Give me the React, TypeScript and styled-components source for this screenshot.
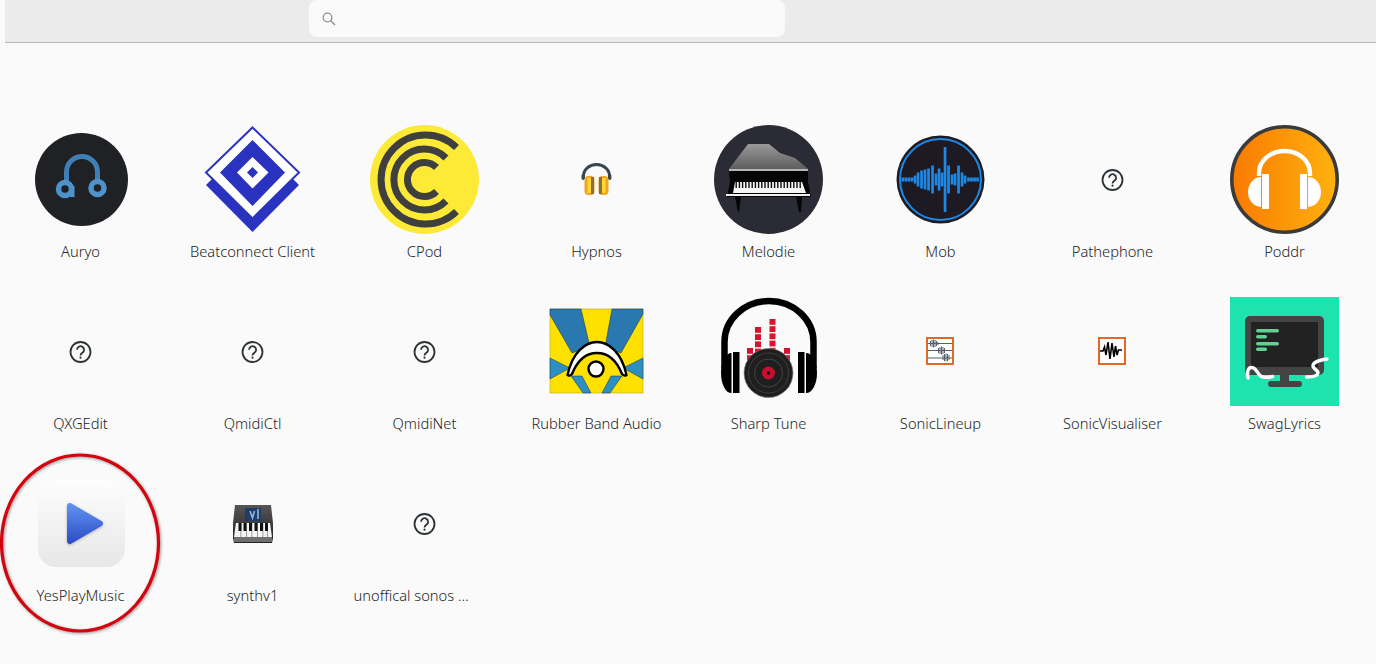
import React from 'react';
import styled, { createGlobalStyle } from 'styled-components';

const GlobalStyle = createGlobalStyle`
    html, body {
        margin: 0;
        height: 100%;
        overflow: hidden;
        background: #fafafa;
    }
`;

const QuestionIcon = () => (
    <svg width="109" height="109" viewBox="0 0 109 109">
        <circle cx="54.500" cy="55" r="10" fill="none" stroke="#2e3436" strokeWidth="1.800" />
        <path d="M51.100 52.700a3.500 3.500 0 1 1 5.500 2.900c-1.300.9-2.100 1.500-2.100 2.900" fill="none" stroke="#2e3436" strokeWidth="1.800" />
        <circle cx="54.500" cy="60.700" r="1.100" fill="#2e3436" />
    </svg>
);

const AuryoIcon = () => (
    <svg width="109" height="109" viewBox="26 125 109 109">
        <circle cx="81.500" cy="179.500" r="46.500" fill="#1f2125" />
        <path d="M66.500 186v-14a15.500 15.500 0 0 1 31 0v10" fill="none" stroke="#3f7fb5" strokeWidth="5" />
        <circle cx="65" cy="189" r="6.500" fill="#1f2125" stroke="#4d92c9" strokeWidth="5.500" />
        <circle cx="97.500" cy="188" r="6.500" fill="#1f2125" stroke="#4d92c9" strokeWidth="5.500" />
        <rect x="70" y="186" width="4.500" height="11" fill="#4d92c9" />
    </svg>
);

const BeatconnectIcon = () => (
    <svg width="109" height="109" viewBox="198 125 109 109">
        <path d="M206 185l46.500 47L299 185l-8-8H214z" fill="#2a33bf" />
        <path d="M252.500 127.500L299 172.500l-46.500 46L206 172.500z" fill="#fff" stroke="#2a33bf" strokeWidth="2" />
        <path d="M252.500 140L285 172.500l-32.500 33.500L220 172.500z" fill="#2a33bf" />
        <path d="M252.500 157L268.500 172.500l-16 16L237 172.500z" fill="#fff" />
        <path d="M252.500 167L258 172.500l-5.500 5.500L247 172.500z" fill="#2a33bf" />
    </svg>
);

const CPodIcon = () => (
    <svg width="109" height="109" viewBox="370 125 109 109">
        <circle cx="424.500" cy="179.500" r="54.500" fill="#fdea36" />
        <g fill="none" stroke="#3f3f3f" strokeWidth="7">
            <path d="M456.500 147.500a44.500 44.500 0 1 0 0 64" />
            <path d="M446 158a30.500 30.500 0 1 0 0 43" />
            <path d="M436.500 167.500a17 17 0 1 0 0 24" />
        </g>
    </svg>
);

const HypnosIcon = () => (
    <svg width="109" height="109" viewBox="542 125 109 109">
        <path d="M583.500 177v-1a13 11.500 0 0 1 26 0v1" fill="none" stroke="#37474f" strokeWidth="3" />
        <rect x="581.500" y="174" width="3.400" height="6" rx="1.700" fill="#37474f" />
        <rect x="608" y="174" width="3.400" height="6" rx="1.700" fill="#37474f" />
        <rect x="584.500" y="176" width="10" height="19" rx="4" fill="#f2a31f" />
        <rect x="598.500" y="176" width="10" height="19" rx="4" fill="#f2a31f" />
        <rect x="591" y="177" width="3" height="17" fill="#8d6e43" />
        <rect x="599" y="177" width="3" height="17" fill="#8d6e43" />
        <rect x="587.500" y="178" width="3.500" height="15" fill="#fdd835" />
        <rect x="602" y="178" width="3.500" height="15" fill="#fdd835" />
    </svg>
);

const MelodieIcon = () => (
    <svg width="109" height="109" viewBox="714 125 109 109">
        <defs>
            <linearGradient id="lid" x1="0" y1="0" x2="0" y2="1">
                <stop offset="0" stopColor="#999" />
                <stop offset="1" stopColor="#5e5e5e" />
            </linearGradient>
        </defs>
        <circle cx="768.500" cy="179.500" r="54.500" fill="#2a2b34" />
        <path d="M748 144h21l11 9 15 5 13 11H729z" fill="url(#lid)" />
        <rect x="729" y="169" width="79" height="2" fill="#b5b5b5" />
        <path d="M729 171h79v11l3 15H727l3-15z" fill="#050505" />
        <path d="M735 182h67l4 11h-73z" fill="#f4f4f4" />
        {Array.from({ length: 21 }, (_, i) => (
            <rect key={i} x={735.500 + i * 3.200} y="182" width="1.400" height="6" fill="#111" />
        ))}
        <rect x="726" y="194" width="84" height="2" fill="#eee" />
        <path d="M735 197h6l-2 15h-1z" fill="#050505" />
        <path d="M796 197h6l-1 15h-2z" fill="#050505" />
    </svg>
);

const mobBars: [number, number][] = [
    [903, 4], [906, 4], [909, 4], [912, 4], [915, 8], [918, 14], [921.500, 18], [925, 20], [928.500, 22], [932.500, 28],
    [936, 12], [939, 22], [942, 14], [945, 65], [948.500, 28], [952, 10], [955, 12], [958.500, 28], [962, 14], [965, 8],
    [968.500, 4], [971.500, 4], [974.500, 4], [977.500, 4],
];

const MobIcon = () => (
    <svg width="109" height="109" viewBox="886 125 109 109">
        <circle cx="940.500" cy="179.500" r="44" fill="#1d1a24" />
        <circle cx="940.500" cy="179.500" r="40.500" fill="none" stroke="#1e88e5" strokeWidth="2" />
        {mobBars.map(([x, h]) => (
            <rect key={x} x={x - 1.300} y={179.500 - h / 2} width="2.700" height={h} fill="#1e88e5" />
        ))}
    </svg>
);

const PoddrIcon = () => (
    <svg width="109" height="109" viewBox="1230 125 109 109">
        <defs>
            <linearGradient id="poddr" x1="0" y1="0" x2="1" y2="0">
                <stop offset="0" stopColor="#f97a00" />
                <stop offset="1" stopColor="#ffb20f" />
            </linearGradient>
        </defs>
        <circle cx="1284.500" cy="179.500" r="52.700" fill="url(#poddr)" stroke="#3a3a3a" strokeWidth="3.600" />
        <path d="M1259 176v-3a25.500 22 0 0 1 51 0v3" fill="none" stroke="#fff" strokeWidth="4.400" />
        <rect x="1262" y="174" width="7" height="35" fill="#fff" />
        <rect x="1300" y="174" width="7" height="35" fill="#fff" />
        <path d="M1261 177a13 15 0 0 0 0 30z" fill="#fff" />
        <path d="M1308 177a13 15 0 0 1 0 30z" fill="#fff" />
    </svg>
);

const RubberBandIcon = () => (
    <svg width="109" height="109" viewBox="542 297 109 109">
        <rect x="550" y="309" width="93" height="84" fill="#ffe100" stroke="#b8a33a" strokeWidth="0.600" />
        <g fill="#2a78b0" stroke="#10324a" strokeWidth="0.500">
            <path d="M550 309h31l9 38-18 6-22-38z" />
            <path d="M612 309h31v5l-22 39-16-6z" />
        </g>
        <g fill="#2c8fc0" stroke="#10324a" strokeWidth="0.500">
            <path d="M550 358l20 10-20 11z" />
            <path d="M643 358l-20 10 20 11z" />
            <path d="M582 376l9 17h-8l-12-17z" />
            <path d="M611 376l-9 17h8l12-17z" />
        </g>
        <path d="M567.500 375c5-23 18-33 29.500-33s24.500 10 29.500 33c-2 1.500-3.500 0-4.500-1-6-15-15-21-25-21s-19 6-25 21c-1 1-3 2.500-4.500 1z" fill="#fff" stroke="#000" strokeWidth="2.400" strokeLinejoin="round" />
        <circle cx="596" cy="369" r="7.500" fill="#fff" stroke="#000" strokeWidth="2.400" />
    </svg>
);

const SharpTuneIcon = () => (
    <svg width="109" height="109" viewBox="714 297 109 109">
        <path d="M724.500 368v-26a44.500 41 0 0 1 89 0v26" fill="none" stroke="#000" strokeWidth="6.500" />
        {[
            [747, 348, 4],
            [755, 327, 8],
            [769.500, 319, 9],
            [784, 348, 4],
        ].map(([x, top, n]) =>
            Array.from({ length: n }, (_, i) => (
                <rect key={`${x}-${i}`} x={x} y={top + i * 7.200} width="6" height="5.800" fill="#d7142f" />
            ))
        )}
        <path d="M731.500 353a10.500 20 0 0 0 0 40z" fill="#000" />
        <path d="M806 353a11 20 0 0 1 0 40z" fill="#000" />
        <rect x="733" y="352" width="6.500" height="41" fill="#000" />
        <rect x="798" y="352" width="6.500" height="41" fill="#000" />
        <circle cx="768.500" cy="373" r="24.500" fill="#1f1f1f" stroke="#888" strokeWidth="0.600" />
        <circle cx="768.500" cy="373" r="20" fill="none" stroke="#3c3c3c" strokeWidth="1" />
        <circle cx="768.500" cy="373" r="14" fill="none" stroke="#444" strokeWidth="1" />
        <circle cx="768.500" cy="373" r="6.500" fill="#c8102e" />
        <circle cx="768.500" cy="373" r="1.800" fill="#111" />
    </svg>
);

const SonicLineupIcon = () => (
    <svg width="109" height="109" viewBox="886 297 109 109">
        <rect x="927" y="338" width="26" height="26" fill="#fff" stroke="#df6a28" strokeWidth="2" />
        <g stroke="#56606c" strokeWidth="1">
            <path d="M928 343.500h24M928 350.500h24M928 358h24" />
            <path d="M930.500 341v5M932 340v7M933.500 339.500v8M935 340v7M936.500 341v5M938 342v3M938.500 348v5M940 347v7M941.500 346.500v8M943 347v7M944.500 348v5M943 355v5M944.500 354v7M946 353.500v8M947.500 354v7M949 355v5" />
        </g>
    </svg>
);

const SonicVisualiserIcon = () => (
    <svg width="109" height="109" viewBox="1058 297 109 109">
        <rect x="1099" y="338" width="26" height="26" fill="#fff" stroke="#df6a28" strokeWidth="2" />
        <path d="M1100 351h3l1.500-4 1.500 8 2-13 2 17 2-16 2 14 1.500-11 1.500 9 1.500-5h3.500" fill="none" stroke="#000" strokeWidth="1.600" />
    </svg>
);

const SwagLyricsIcon = () => (
    <svg width="109" height="109" viewBox="1230 297 109 109">
        <rect x="1230" y="297" width="109" height="109" fill="#1de3ae" />
        <rect x="1245" y="316" width="79" height="59" rx="5" fill="#444" />
        <rect x="1251" y="322" width="67" height="45" fill="#222" />
        <rect x="1280" y="375" width="9" height="6" fill="#444" />
        <rect x="1268" y="381" width="34" height="6" rx="3" fill="#444" />
        <g fill="#63cf93">
            <rect x="1256" y="329" width="23" height="3.400" rx="1.700" />
            <rect x="1256" y="335" width="11" height="3.400" rx="1.700" />
            <rect x="1256" y="342" width="23" height="3.400" rx="1.700" />
            <rect x="1256" y="347.500" width="11" height="3.400" rx="1.700" />
        </g>
        <g fill="none" stroke="#fff" strokeWidth="3.400" strokeLinecap="round">
            <path d="M1248 378c-1-6 0-11 4-10.500 5 .5 6 9 11 9.500 3 .3 6 .5 9.500-.5" />
            <path d="M1306.500 377c5 0 11-1 11.500-4 .5-3-5.500-4-5-7.500.5-4 7-5.500 14-6.500" />
        </g>
    </svg>
);

const YesPlayIcon = () => (
    <svg width="109" height="109" viewBox="26 469 109 109">
        <defs>
            <linearGradient id="tile" x1="0" y1="0" x2="0" y2="1">
                <stop offset="0" stopColor="#fdfdfd" />
                <stop offset="1" stopColor="#e7e7e7" />
            </linearGradient>
            <linearGradient id="play" x1="0" y1="0" x2="0" y2="1">
                <stop offset="0" stopColor="#5e90ef" />
                <stop offset="1" stopColor="#2e50c6" />
            </linearGradient>
            <filter id="playShadow" x="-30%" y="-30%" width="160%" height="160%">
                <feDropShadow dx="0" dy="1" stdDeviation="1.500" floodColor="#000" floodOpacity="0.25" />
            </filter>
        </defs>
        <rect x="38" y="480" width="87" height="87" rx="18" fill="url(#tile)" />
        <path d="M70 506l30 17.500L70 541z" fill="url(#play)" stroke="url(#play)" strokeWidth="6" strokeLinejoin="round" filter="url(#playShadow)" />
    </svg>
);

const SynthIcon = () => (
    <svg width="109" height="109" viewBox="198 469 109 109">
        <defs>
            <linearGradient id="panel" x1="0" y1="0" x2="0" y2="1">
                <stop offset="0" stopColor="#555" />
                <stop offset="1" stopColor="#222" />
            </linearGradient>
        </defs>
        <path d="M235 505h36l2 18v15l-1 5h-38l-1-5v-15z" fill="url(#panel)" />
        <rect x="245" y="508" width="16" height="13" fill="#1f3c66" />
        <path d="M250 511l2.500 7 2-7M258 509v10" fill="none" stroke="#8fb7e6" strokeWidth="1.600" />
        <path d="M236 523h34l2 14h-38z" fill="#f4f4f4" />
        {[240.500, 246, 251.500, 257, 262.500, 267].map(x => (
            <rect key={x} x={x} y="523" width="0.800" height="14" fill="#888" />
        ))}
        {[238.500, 243.500, 249, 254.500, 260, 265].map(x => (
            <rect key={x} x={x} y="523" width="3" height="8" fill="#111" />
        ))}
        <rect x="234" y="537" width="38" height="5" rx="1" fill="#6f6f6f" />
    </svg>
);

interface AppEntry {
    name: string;
    icon: React.ReactNode;
    truncated?: boolean;
}

const APPS: AppEntry[] = [
    { name: 'Auryo', icon: <AuryoIcon /> },
    { name: 'Beatconnect Client', icon: <BeatconnectIcon /> },
    { name: 'CPod', icon: <CPodIcon /> },
    { name: 'Hypnos', icon: <HypnosIcon /> },
    { name: 'Melodie', icon: <MelodieIcon /> },
    { name: 'Mob', icon: <MobIcon /> },
    { name: 'Pathephone', icon: <QuestionIcon /> },
    { name: 'Poddr', icon: <PoddrIcon /> },
    { name: 'QXGEdit', icon: <QuestionIcon /> },
    { name: 'QmidiCtl', icon: <QuestionIcon /> },
    { name: 'QmidiNet', icon: <QuestionIcon /> },
    { name: 'Rubber Band Audio', icon: <RubberBandIcon /> },
    { name: 'Sharp Tune', icon: <SharpTuneIcon /> },
    { name: 'SonicLineup', icon: <SonicLineupIcon /> },
    { name: 'SonicVisualiser', icon: <SonicVisualiserIcon /> },
    { name: 'SwagLyrics', icon: <SwagLyricsIcon /> },
    { name: 'YesPlayMusic', icon: <YesPlayIcon /> },
    { name: 'synthv1', icon: <SynthIcon /> },
    { name: 'unoffical sonos …', icon: <QuestionIcon />, truncated: true },
];

export default function App() {
    return (
        <Page>
            <GlobalStyle />
            <Header>
                <SearchBox>
                    <svg width="16" height="16" viewBox="0 0 16 16">
                        <circle cx="6.500" cy="6.500" r="4.300" fill="none" stroke="#8f8f8f" strokeWidth="1.300" />
                        <path d="M9.800 9.800l4.200 4.200" stroke="#8f8f8f" strokeWidth="1.500" />
                    </svg>
                </SearchBox>
            </Header>
            <Grid>
                {APPS.map(app => (
                    <Cell key={app.name}>
                        <IconBox>{app.icon}</IconBox>
                        <Label $truncated={app.truncated}>{app.name}</Label>
                    </Cell>
                ))}
            </Grid>
            <Highlight width="164" height="184" viewBox="0 0 164 184">
                <ellipse cx="80" cy="90" rx="78.500" ry="88" fill="none" stroke="#d3040f" strokeWidth="3.200" />
            </Highlight>
        </Page>
    );
}

const Page = styled.div`
    position: relative;
    width: 1376px;
    height: 664px;
    overflow: hidden;
    background: #fafafa;
    font-family: 'Noto Sans', 'Open Sans', sans-serif;
`;

const Header = styled.header`
    display: flex;
    align-items: flex-start;
    height: 42px;
    margin-left: 5px;
    padding-left: 304px;
    background: #ebebeb;
    border-bottom: 1px solid #b9b9b9;
`;

const SearchBox = styled.div`
    display: flex;
    align-items: center;
    width: 476px;
    height: 37px;
    padding-left: 12px;
    box-sizing: border-box;
    background: #fafafa;
    border-radius: 8px;
`;

const Grid = styled.main`
    display: grid;
    grid-template-columns: repeat(8, 172px);
    grid-auto-rows: 172px;
    margin-left: -5.5px;
    padding-top: 51px;
`;

const Cell = styled.div`
    display: flex;
    flex-direction: column;
    align-items: center;
    padding-top: 31px;
`;

const IconBox = styled.div`
    width: 109px;
    height: 109px;

    svg {
        display: block;
    }
`;

const Label = styled.span<{ $truncated?: boolean }>`
    width: 142px;
    margin-top: 8px;
    font-size: 14.7px;
    font-weight: 300;
    line-height: 18px;
    color: #241f1f;
    white-space: nowrap;
    text-align: ${({ $truncated }) => ($truncated ? 'left' : 'center')};
`;

const Highlight = styled.svg`
    position: absolute;
    left: 0;
    top: 453px;
    filter: drop-shadow(1px 1px 1.5px rgba(0, 0, 0, 0.4));
`;
